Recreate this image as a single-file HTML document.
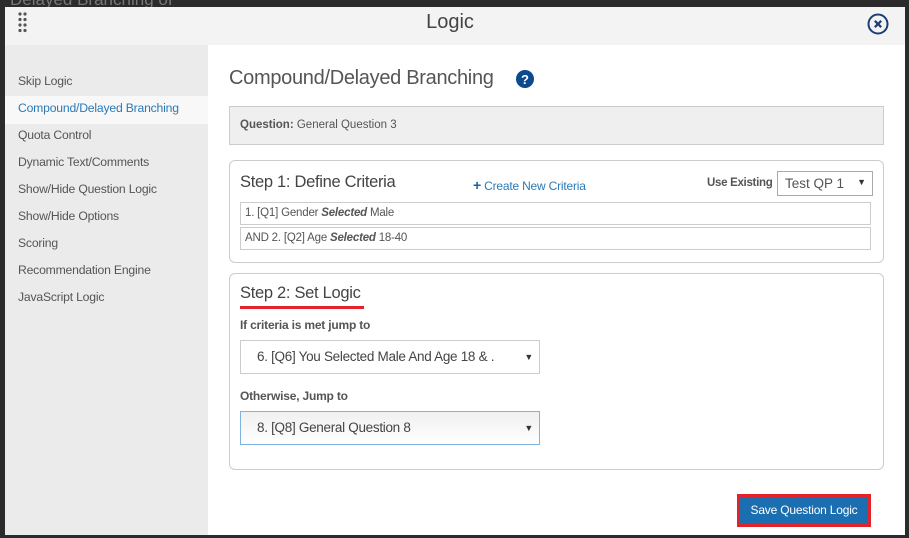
<!DOCTYPE html>
<html><head><style>
*{box-sizing:border-box;margin:0;padding:0}
body{width:909px;height:538px;background:#2b2b2b;position:relative;overflow:hidden;font-family:"Liberation Sans",sans-serif;color:#555}
.a{position:absolute}
#modal{left:5px;top:7px;width:900px;height:528px;background:#fff}
#hdr{left:5px;top:7px;width:900px;height:38px;background:#f3f3f3}
#side{left:5px;top:45px;width:203px;height:490px;background:#ebebeb}
.nav{position:absolute;left:13px;font-size:12.2px;color:#555;letter-spacing:-0.2px}
.box{position:absolute;border:1px solid #ccc;border-radius:6px;background:#fff}
.row{position:absolute;border:1px solid #ccc;font-size:11.5px;padding-left:4px;line-height:21px;background:#fff;letter-spacing:-0.2px}
.sel{position:absolute;border:1px solid #ccc;font-size:13.5px;line-height:32px;padding-left:16px;color:#444;letter-spacing:-0.3px}
.arr{position:absolute;right:6px;font-size:9px;color:#333}
</style></head><body>
<div class="a" style="left:10px;top:-10px;color:#777;font-size:17px">Delayed Branching of</div>
<div id="modal" class="a"></div>
<div id="hdr" class="a">
 <svg class="a" style="left:13px;top:5px" width="10" height="22"><g fill="#555"><circle cx="2" cy="2" r="1.6"/><circle cx="7" cy="2" r="1.6"/><circle cx="2" cy="7.5" r="1.6"/><circle cx="7" cy="7.5" r="1.6"/><circle cx="2" cy="13" r="1.6"/><circle cx="7" cy="13" r="1.6"/><circle cx="2" cy="18.5" r="1.6"/><circle cx="7" cy="18.5" r="1.6"/></g></svg>
 <div class="a" style="left:0;width:890px;text-align:center;top:4px;font-size:20px;color:#444">Logic</div>
 <svg class="a" style="left:862px;top:6px" width="22" height="22"><circle cx="11" cy="11" r="9.5" fill="none" stroke="#1b3f73" stroke-width="2"/><path d="M7.8 7.8L14.2 14.2M14.2 7.8L7.8 14.2" stroke="#1b3f73" stroke-width="2.2"/></svg>
</div>
<div id="side" class="a">
 <div class="a" style="left:0;top:51px;width:203px;height:28px;background:#f8f8f8"></div>
 <div class="nav" style="top:29px">Skip Logic</div>
 <div class="nav" style="top:56px;color:#2a7ab8">Compound/Delayed Branching</div>
 <div class="nav" style="top:83px">Quota Control</div>
 <div class="nav" style="top:110px">Dynamic Text/Comments</div>
 <div class="nav" style="top:137px">Show/Hide Question Logic</div>
 <div class="nav" style="top:164px">Show/Hide Options</div>
 <div class="nav" style="top:191px">Scoring</div>
 <div class="nav" style="top:218px">Recommendation Engine</div>
 <div class="nav" style="top:245px">JavaScript Logic</div>
</div>
<div class="a" style="left:229px;top:67px;font-size:20px;color:#555;letter-spacing:-0.3px">Compound/Delayed Branching</div>
<svg class="a" style="left:516px;top:70px" width="18" height="18"><circle cx="9" cy="9" r="9" fill="#0b4a8c"/><text x="9" y="14" text-anchor="middle" font-family="Liberation Sans" font-weight="bold" font-size="13" fill="#fff">?</text></svg>
<div class="a" style="left:229px;top:106px;width:655px;height:39px;background:#efefef;border:1px solid #ccc;font-size:11.5px;line-height:36px;padding-left:10px;color:#555"><b>Question:</b> General Question 3</div>

<div class="box" style="left:229px;top:160px;width:655px;height:103px"></div>
<div class="a" style="left:240px;top:173px;font-size:16.5px;color:#444;letter-spacing:-0.3px">Step 1: Define Criteria</div>
<div class="a" style="left:473px;top:177px;font-size:12px;color:#2a7ab8;letter-spacing:-0.2px"><b style="font-size:14px;color:#1b5fa0">+</b> Create New Criteria</div>
<div class="a" style="left:707px;top:177px;font-size:11.5px;font-weight:bold;color:#555;letter-spacing:-0.3px">Use Existing</div>
<div class="a" style="left:777px;top:171px;width:96px;height:25px;border:1px solid #aaa;font-size:13.5px;line-height:23px;padding-left:7px;color:#555">Test QP 1<span class="arr" style="line-height:21px">▼</span></div>
<div class="row" style="left:240px;top:202px;width:631px;height:23px">1. [Q1] Gender <b><i>Selected</i></b> Male</div>
<div class="row" style="left:240px;top:227px;width:631px;height:23px">AND 2. [Q2] Age <b><i>Selected</i></b> 18-40</div>

<div class="box" style="left:229px;top:273px;width:655px;height:197px"></div>
<div class="a" style="left:240px;top:284px;font-size:16.5px;color:#444;letter-spacing:-0.3px">Step 2: Set Logic</div>
<div class="a" style="left:240px;top:306px;width:124px;height:3px;background:#e3222a"></div>
<div class="a" style="left:240px;top:318px;font-size:12px;font-weight:bold;color:#555;letter-spacing:-0.2px">If criteria is met jump to</div>
<div class="sel" style="left:240px;top:340px;width:300px;height:34px">6. [Q6] You Selected Male And Age 18 &amp; .<span class="arr">▼</span></div>
<div class="a" style="left:240px;top:389px;font-size:12px;font-weight:bold;color:#555;letter-spacing:-0.2px">Otherwise, Jump to</div>
<div class="sel" style="left:240px;top:411px;width:300px;height:34px;border-color:#7fb3e0;background:linear-gradient(#f0f0f0,#fff)">8. [Q8] General Question 8<span class="arr">▼</span></div>

<div class="a" style="left:737px;top:494px;width:134px;height:33px;border:3px solid #e3222a;background:#1b6fb0;color:#fff;font-size:12px;text-align:center;line-height:27px;letter-spacing:-0.2px">Save Question Logic</div>
</body></html>
